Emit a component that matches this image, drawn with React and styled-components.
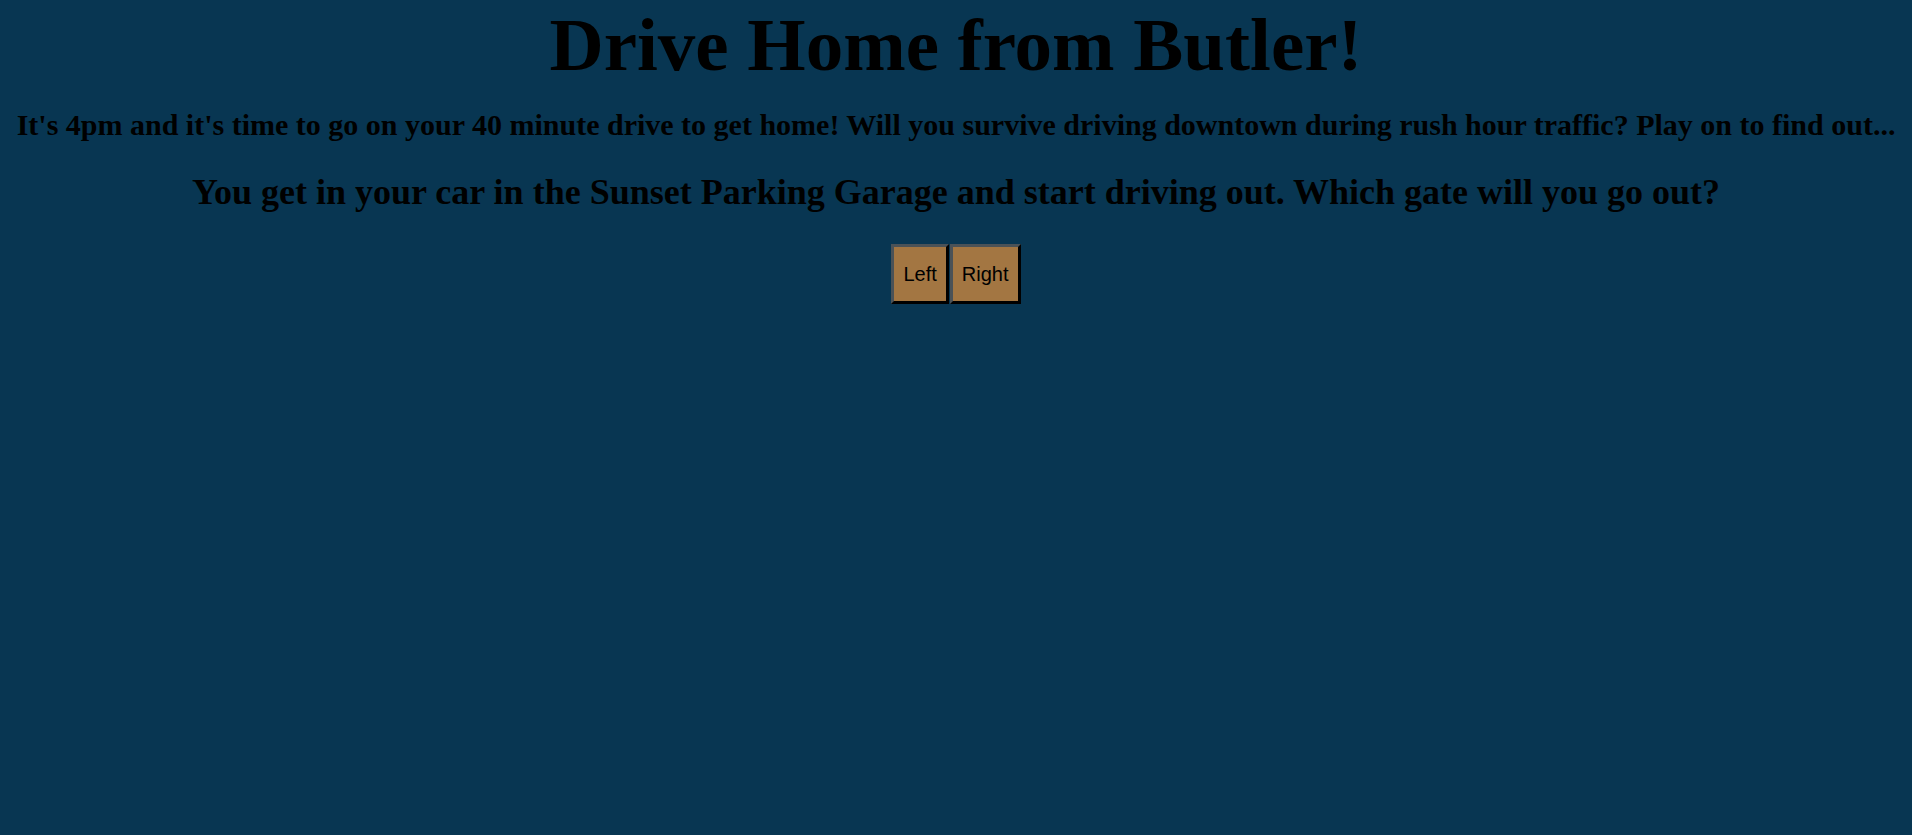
import React from "react";
import styled, { createGlobalStyle } from "styled-components";

const GlobalStyle = createGlobalStyle`
  html, body {
    margin: 0;
    background: #083652;
    min-height: 100%;
  }
  body {
    font-family: "Liberation Serif", "Times New Roman", serif;
    color: #000;
  }
`;

const Page = styled.main`
  text-align: center;
  padding: 0 8px;
`;

const Title = styled.h1`
  font-size: 75px;
  line-height: 1.15;
  font-weight: bold;
  margin: 2px 0 0;
`;

const Intro = styled.h3`
  font-size: 30px;
  line-height: 1.15;
  margin: 20px 0 0;
`;

const Question = styled.h2`
  font-size: 36px;
  line-height: 1.15;
  margin: 29px 0 0;
`;

const Choices = styled.div`
  display: flex;
  justify-content: center;
  gap: 1px;
  margin-top: 31px;
`;

const Choice = styled.button`
  font-family: "Liberation Sans", Arial, sans-serif;
  font-size: 20px;
  color: #000;
  background: #a37642;
  border: 3px solid;
  border-color: #4b5257 #000 #000 #4b5257;
  padding: 0 9px;
  height: 60px;
  cursor: pointer;
`;

export default function App() {
  return (
    <>
      <GlobalStyle />
      <Page>
        <Title>Drive Home from Butler!</Title>
        <Intro>
          It's 4pm and it's time to go on your 40 minute drive to get home! Will you survive
          driving downtown during rush hour traffic? Play on to find out...
        </Intro>
        <Question>
          You get in your car in the Sunset Parking Garage and start driving out. Which gate
          will you go out?
        </Question>
        <Choices>
          <Choice>Left</Choice>
          <Choice>Right</Choice>
        </Choices>
      </Page>
    </>
  );
}
